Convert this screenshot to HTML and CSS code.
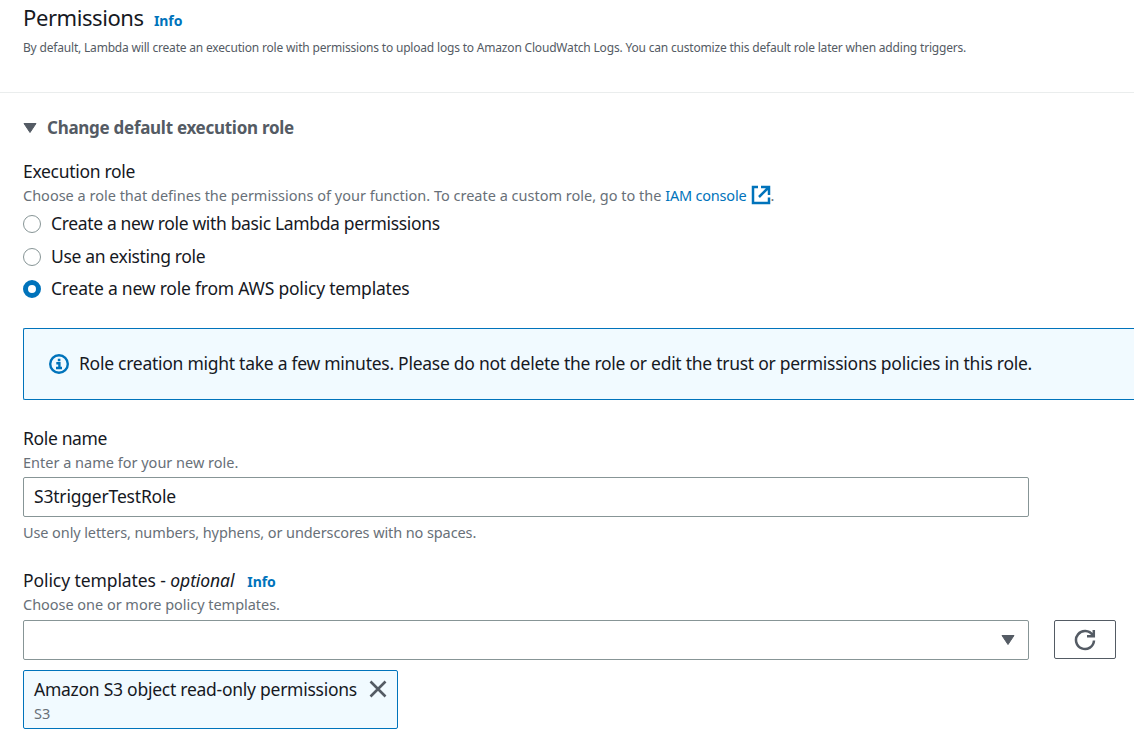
FILE: index.html
```html
<!DOCTYPE html>
<html lang="en">
<head>
<meta charset="utf-8">
<title>Permissions</title>
<link rel="stylesheet" href="styles.css">
</head>
<body>
<header class="header">
  <div class="title-row"><h2 class="title"><span class="t-title">Permissions</span></h2><a class="info"><span>Info</span></a></div>
  <p class="desc"><span class="t-desc">By default, Lambda will create an execution role with permissions to upload logs to Amazon CloudWatch Logs. You can customize this default role later when adding triggers.</span></p>
</header>
<main class="content">
  <div class="expander">
    <svg class="caret" width="14" height="12" viewBox="0 0 14 12"><path d="M1 1.5h12L7 10.5z"/></svg>
    <span class="t-expander">Change default execution role</span>
  </div>
  <section class="field role">
    <div class="label"><span class="t-exec">Execution role</span></div>
    <div class="hint"><span class="t-choose">Choose a role that defines the permissions of your function. To create a custom role, go to the</span> <a class="link t-iam">IAM console</a><svg class="external" width="20" height="20" viewBox="0 0 20 20"><path d="M7 2H2v16h16v-5.5M10 2h8v8M17.5 2.5L8 12"/></svg>.</div>
    <label class="radio r1"><i class="dot"></i><span class="t-r1">Create a new role with basic Lambda permissions</span></label>
    <label class="radio r2"><i class="dot"></i><span class="t-r2">Use an existing role</span></label>
    <label class="radio r3"><i class="dot on"></i><span class="t-r3">Create a new role from AWS policy templates</span></label>
  </section>
  <div class="alert">
    <svg class="alert-icon" width="20" height="20" viewBox="0 0 20 20"><circle cx="10" cy="10" r="8.8"/><path d="M8.8 6h2.6M7.3 9.2h3.1v5M7 14h6"/></svg>
    <span class="t-alert">Role creation might take a few minutes. Please do not delete the role or edit the trust or permissions policies in this role.</span>
  </div>
  <section class="field name">
    <div class="label"><span class="t-name">Role name</span></div>
    <div class="hint"><span class="t-enter">Enter a name for your new role.</span></div>
    <div class="input"><span class="t-value">S3triggerTestRole</span></div>
    <div class="hint below"><span class="t-use">Use only letters, numbers, hyphens, or underscores with no spaces.</span></div>
  </section>
  <section class="field templates">
    <div class="label"><span class="t-policy">Policy templates - <em>optional</em></span><a class="info"><span>Info</span></a></div>
    <div class="hint"><span class="t-one">Choose one or more policy templates.</span></div>
    <div class="select-row">
      <div class="input select"><svg class="caret" width="14" height="12" viewBox="0 0 14 12"><path d="M1 1.5h12L7 10.5z"/></svg></div>
      <button class="refresh" aria-label="Refresh"><svg width="22" height="22" viewBox="0 0 22 22"><path d="M20 11.5A9 9 0 1 1 18.6 6.2M19.8 1v6.2H13"/></svg></button>
    </div>
    <div class="token">
      <div class="token-row"><span class="t-token">Amazon S3 object read-only permissions</span><svg width="18" height="18" viewBox="0 0 18 18"><path d="M1.5 1.5l15 15M16.5 1.5l-15 15"/></svg></div>
      <div class="hint"><span class="t-s3">S3</span></div>
    </div>
  </section>
</main>
</body>
</html>
```
FILE: styles.css
```css
* { box-sizing: border-box; }
body { margin: 0; height: 743px; overflow: hidden; background: #fff; color: #16191f; font: 17.5px/24px "Noto Sans", sans-serif; white-space: nowrap; }
.header { height: 93px; padding: 2px 0 0 23px; border-bottom: 1px solid #eaeded; }
.title-row { display: flex; align-items: baseline; height: 30px; line-height: 30px; }
.title { margin: 0; font-size: 22px; font-weight: 400; width: 131px; letter-spacing: -0.42px; }
.info { color: #0073bb; font-size: 14px; font-weight: 700; letter-spacing: -0.1px; }
.desc { margin: 6px 0 0; font-size: 12px; line-height: 20px; color: #545b64; letter-spacing: -0.187px; }
.content { padding-left: 23px; }
.expander { display: flex; align-items: center; margin-top: 23px; color: #545b64; font-size: 17px; font-weight: 700; letter-spacing: -0.28px; }
.expander .caret { margin-right: 10px; }
.caret { fill: #545b64; stroke: #545b64; stroke-linejoin: round; }
.role { margin-top: 20px; }
.label { height: 24px; line-height: 22px; display: flex; align-items: baseline; }
.hint { height: 24px; line-height: 22px; font-size: 14.5px; color: #687078; }
.link { color: #0073bb; }
.t-iam { letter-spacing: -0.2px; }
.external { margin: 0 -1px 0 5px; vertical-align: -4px; fill: none; stroke: #0073bb; stroke-width: 2.5; }
.radio { display: flex; align-items: center; height: 24px; margin-top: 4px; }
.radio span, .alert span, .input span, .token-row span { padding-bottom: 2px; }
.r2 { margin-top: 9px; }
.r3 { margin-top: 8px; }
.t-r1, .t-r2, .t-name { letter-spacing: -0.35px; }
.t-r3 { letter-spacing: -0.21px; }
.t-exec { letter-spacing: -0.3px; }
.t-alert { letter-spacing: -0.27px; }
.t-value { letter-spacing: -0.19px; }
.t-use { letter-spacing: -0.1px; }
.t-one { letter-spacing: -0.03px; }
.t-policy { letter-spacing: -0.09px; }
.t-token { letter-spacing: -0.26px; }
.dot { width: 18px; height: 18px; margin-right: 10px; border: 1px solid #879596; border-radius: 50%; }
.dot.on { border: 5.5px solid #0073bb; }
.alert { display: flex; align-items: center; height: 72px; margin-top: 27px; padding-left: 25px; border: 1px solid #0073bb; border-right: 0; border-radius: 2px 0 0 2px; background: #f1faff; }
.alert-icon { margin-right: 10px; fill: none; stroke: #0073bb; stroke-width: 2.4; }
.name { margin-top: 27px; }
.input { display: flex; align-items: center; width: 1006px; height: 40px; margin-top: 2px; padding: 0 10px; border: 1px solid #879596; border-radius: 2px; }
.below { margin-top: 4px; }
.templates { margin-top: 24px; }
.templates .info { margin-left: 13px; }
.select-row { display: flex; gap: 25px; margin-top: 3px; }
.select { justify-content: flex-end; margin: 0; padding-right: 13px; }
.refresh { display: flex; align-items: center; justify-content: center; width: 62px; height: 39px; padding: 0; border: 1px solid #545b64; border-radius: 2px; background: #fff; }
.refresh svg { fill: none; stroke: #545b64; stroke-width: 2.5; }
.token { width: 375px; height: 59px; margin-top: 10px; padding: 7px 10px 0; border: 1px solid #0073bb; border-radius: 2px; background: #f1faff; }
.token-row { display: flex; align-items: center; justify-content: space-between; height: 24px; }
.token svg { margin-bottom: 2px; fill: none; stroke: #545b64; stroke-width: 2.6; }
```
